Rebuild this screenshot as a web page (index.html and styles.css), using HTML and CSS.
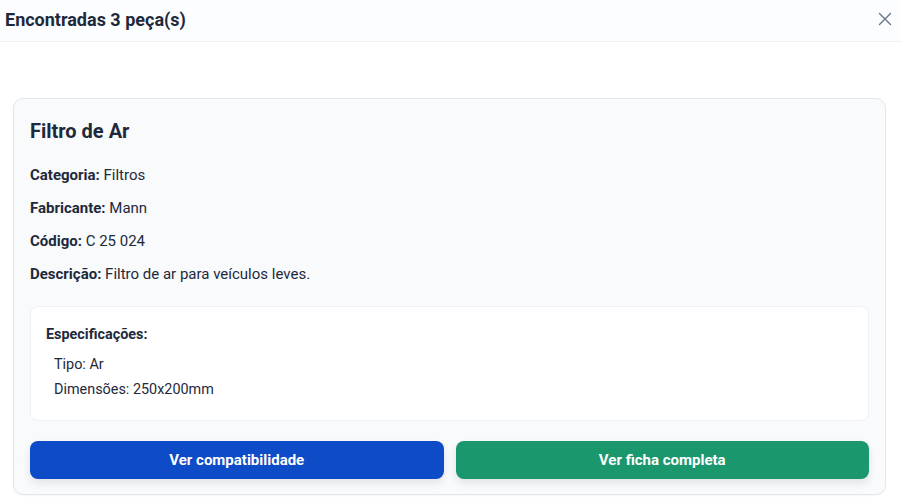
FILE: index.html
```html
<!DOCTYPE html>
<html lang="pt">
<head>
<meta charset="utf-8">
<link rel="stylesheet" href="styles.css">
</head>
<body>
<div class="modal">
  <header class="modal-header">
    <h2 class="modal-title">Encontradas 3 peça(s)</h2>
    <button class="close" aria-label="Fechar">
      <svg width="16" height="16" viewBox="0 0 16 16" fill="none" stroke="#64748b" stroke-width="1.4" stroke-linecap="round"><path d="M2.5 2.5l11 11M13.5 2.5l-11 11"/></svg>
    </button>
  </header>
  <main class="modal-body">
    <section class="card">
      <h3 class="card-title">Filtro de Ar</h3>
      <p class="row"><strong>Categoria:</strong> Filtros</p>
      <p class="row"><strong>Fabricante:</strong> Mann</p>
      <p class="row"><strong>Código:</strong> C 25 024</p>
      <p class="row"><strong>Descrição:</strong> Filtro de ar para veículos leves.</p>
      <div class="specs">
        <h4 class="specs-title">Especificações:</h4>
        <ul class="specs-list">
          <li>Tipo: Ar</li>
          <li>Dimensões: 250x200mm</li>
        </ul>
      </div>
      <div class="actions">
        <button class="btn btn-blue">Ver compatibilidade</button>
        <button class="btn btn-green">Ver ficha completa</button>
      </div>
    </section>
  </main>
</div>
</body>
</html>
```
FILE: styles.css
```css
* { box-sizing: border-box; }
html, body { margin: 0; padding: 0; background: #ffffff; }
body {
  font-family: Roboto, "Liberation Sans", Arial, sans-serif;
  color: #1e293b;
  width: 901px;
  height: 502px;
  overflow: hidden;
}
.modal-header {
  height: 42px;
  display: flex;
  align-items: center;
  justify-content: space-between;
  padding: 0 8px 0 5px;
  background: #fcfdfe;
  border-bottom: 1px solid #eceff3;
}
.modal-title {
  margin: 0;
  font-size: 18px;
  font-weight: 700;
  color: #1e293b;
  line-height: 1;
  padding-bottom: 2px;
}
.close {
  border: 0;
  background: none;
  padding: 0;
  width: 16px;
  height: 16px;
  display: flex;
  margin-bottom: 4px;
}
.modal-body {
  padding: 56px 15px 0 13px;
}
.card {
  background: #f8fafc;
  border: 1px solid #e2e8f0;
  border-radius: 10px;
  padding: 16px 16px 15px 16px;
  box-shadow: 0 1px 2px rgba(15, 23, 42, 0.04);
}
.card-title {
  margin: 4px 0 23px;
  font-size: 20px;
  font-weight: 700;
  line-height: 24px;
  color: #1e293b;
}
.row {
  margin: 0 0 14px;
  font-size: 15px;
  line-height: 19px;
  color: #1e293b;
}
.row strong { font-weight: 700; }
.specs {
  margin-top: 22px;
  background: #ffffff;
  border: 1px solid #eef1f5;
  border-radius: 8px;
  padding: 18px 16px 18px 15px;
}
.specs-title {
  margin: 0 0 7px;
  font-size: 14.4px;
  font-weight: 700;
  line-height: 20px;
  color: #1e293b;
}
.specs-list {
  list-style: none;
  margin: 0;
  padding: 0 0 0 8px;
}
.specs-list li {
  font-size: 14.4px;
  line-height: 25px;
  color: #1e293b;
}
.actions {
  display: grid;
  grid-template-columns: 1fr 1fr;
  gap: 12px;
  margin-top: 20px;
}
.btn {
  height: 38px;
  border: 0;
  border-radius: 8px;
  color: #ffffff;
  font-family: Roboto, "Liberation Sans", Arial, sans-serif;
  font-size: 15px;
  font-weight: 700;
  box-shadow: 0 4px 8px rgba(15, 23, 42, 0.10);
}
.btn-blue { background: #0e4bc6; }
.btn-green { background: #1a976d; }
```
